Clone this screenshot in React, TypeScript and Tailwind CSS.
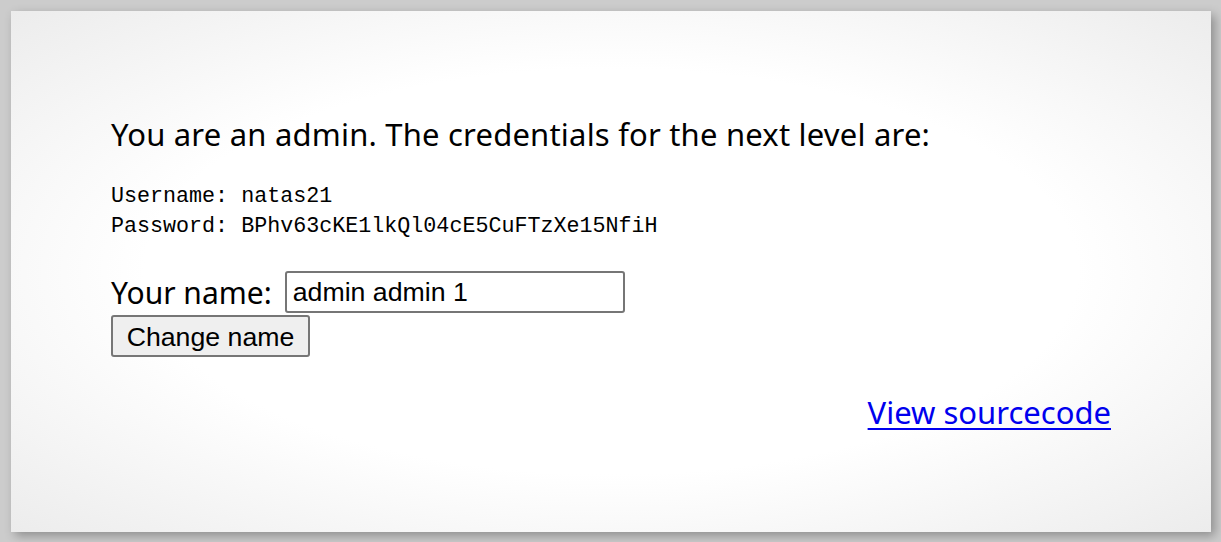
export default function App() {
  return (
    <div className="w-[1221px] h-[542px] bg-[#cccccc] pt-[11px] pl-[11px] overflow-hidden">
      <div
        className="w-[1200px] h-[521px] bg-[radial-gradient(ellipse_at_center,#ffffff_55%,#ececec_100%)] shadow-[4px_4px_10px_rgba(0,0,0,0.3)] px-[100px] pt-[103px] flex flex-col"
        style={{ fontFamily: '"Noto Sans", "Noto Sans CJK KR", sans-serif' }}
      >
        <div className="text-[31px] leading-[40px] tracking-[0.2px] text-black">
          You are an admin. The credentials for the next level are:
        </div>
        <div
          className="mt-[28px] text-[21.7px] leading-[30px] text-black"
          style={{ fontFamily: '"Liberation Mono", monospace' }}
        >
          <div>Username: natas21</div>
          <div>Password: BPhv63cKE1lkQl04cE5CuFTzXe15NfiH</div>
        </div>
        <div className="mt-[29px] flex items-center h-[42px]">
          <span className="text-[30px] text-black mr-[13px]">Your name:</span>
          <input
            defaultValue="admin admin 1"
            className="w-[340px] h-[42px] border-2 border-[#767676] rounded-[3px] bg-white pl-[6px] pr-[5px] text-[26.7px] text-black outline-none"
            style={{ fontFamily: '"Liberation Sans", Arial, sans-serif' }}
          />
        </div>
        <div className="mt-[2px]">
          <button
            className="w-[199px] h-[42px] border-2 border-[#767676] rounded-[3px] bg-[#efefef] text-[26.7px] text-black"
            style={{ fontFamily: '"Liberation Sans", Arial, sans-serif' }}
          >
            Change name
          </button>
        </div>
        <div className="mt-[35px] flex justify-end">
          <a
            href="#"
            className="text-[31px] leading-[40px] text-[#0000ee] underline decoration-2 underline-offset-[4px]"
          >
            View sourcecode
          </a>
        </div>
      </div>
    </div>
  );
}
